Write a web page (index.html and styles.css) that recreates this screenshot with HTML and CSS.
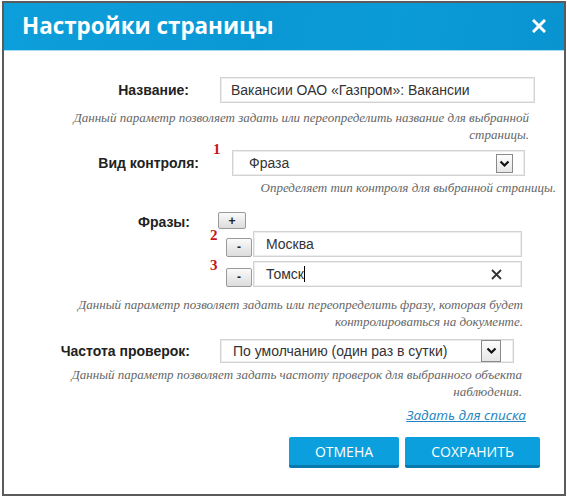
FILE: index.html
```html
<!DOCTYPE html>
<html lang="ru">
<head>
<meta charset="utf-8">
<title>Настройки страницы</title>
<link rel="stylesheet" href="styles.css">
</head>
<body>
<div class="dialog">
  <div class="header">
    <h1 class="title">Настройки страницы</h1>
    <span class="close" aria-label="Закрыть">
      <svg width="14" height="14" viewBox="0 0 14 14"><path d="M2 2 L12 12 M12 2 L2 12" stroke="#fff" stroke-width="3" stroke-linecap="square"/></svg>
    </span>
  </div>
  <div class="content">
    <div class="row row-name">
      <label class="label">Название:</label>
      <div class="field input-name">Вакансии ОАО «Газпром»: Вакансии</div>
    </div>
    <p class="hint hint-name">Данный параметр позволяет задать или переопределить название для выбранной<br>страницы.</p>

    <div class="row row-type">
      <label class="label">Вид контроля:</label>
      <div class="field select select-type">
        <span class="marker m1">1</span>
        <span>Фраза</span>
        <span class="arrow"><svg width="11" height="8" viewBox="0 0 11 8"><path d="M1.5 1.5 L5.5 5.5 L9.5 1.5" fill="none" stroke="#111" stroke-width="2.2"/></svg></span>
      </div>
    </div>
    <p class="hint hint-type">Определяет тип контроля для выбранной страницы.</p>

    <div class="phrases">
      <label class="label">Фразы:</label>
      <div class="phrase-list">
        <button class="btn-small btn-plus">+</button>
        <div class="phrase">
          <span class="marker m2">2</span>
          <button class="btn-small btn-minus">-</button>
          <div class="field phrase-input">Москва</div>
        </div>
        <div class="phrase">
          <span class="marker m3">3</span>
          <button class="btn-small btn-minus">-</button>
          <div class="field phrase-input">Томск<span class="caret"></span>
            <span class="clear"><svg width="11" height="11" viewBox="0 0 11 11"><path d="M1 1 L10 10 M10 1 L1 10" stroke="#333" stroke-width="1.8"/></svg></span>
          </div>
        </div>
      </div>
    </div>
    <p class="hint hint-phrase">Данный параметр позволяет задать или переопределить фразу, которая будет<br>контролироваться на документе.</p>

    <div class="row row-freq">
      <label class="label">Частота проверок:</label>
      <div class="field select select-freq">
        <span>По умолчанию (один раз в сутки)</span>
        <span class="arrow arrow-tall"><svg width="11" height="8" viewBox="0 0 11 8"><path d="M1.5 1.5 L5.5 5.5 L9.5 1.5" fill="none" stroke="#111" stroke-width="2.2"/></svg></span>
      </div>
    </div>
    <p class="hint hint-freq">Данный параметр позволяет задать частоту проверок для выбранного объекта<br>наблюдения.</p>

    <div class="link-row"><a class="link" href="#">Задать для списка</a></div>

    <div class="actions">
      <button class="btn btn-cancel">ОТМЕНА</button>
      <button class="btn btn-save">СОХРАНИТЬ</button>
    </div>
  </div>
</div>
</body>
</html>
```

FILE: styles.css
```css
* { box-sizing: border-box; }
body {
  margin: 0;
  background: #fff;
  font-family: "Liberation Sans", Arial, sans-serif;
  color: #222;
}
.dialog {
  margin: 1px 0 0 2px;
  width: 564px;
  height: 495px;
  border: 2px solid #5b5b5b;
  background: #fff;
}
.header {
  height: 48px;
  background: linear-gradient(100deg, #0d9fdb 0%, #0a98d5 45%, #0b9bd7 70%, #0994d0 100%);
  border-bottom: 1px solid #a6dbf1;
  display: flex;
  align-items: center;
  justify-content: space-between;
  padding: 0 18px 0 18px;
}
.title {
  margin: 0;
  font-family: "Open Sans", sans-serif;
  font-weight: 700;
  font-size: 22.4px;
  color: #fff;
  position: relative;
  top: -1px;
}
.close { display: flex; position: relative; top: -1px; }

.content { display: flex; flex-direction: column; }

.row { display: flex; align-items: center; }
.label {
  font-weight: 700;
  font-size: 14px;
  color: #222;
  text-align: right;
  flex: none;
}
.field {
  border: 1px solid #d3d3d3;
  box-shadow: inset 0 0 0 1px #ececec;
  background: #fff;
  font-size: 14px;
  color: #333;
  display: flex;
  align-items: center;
  position: relative;
}

.row-name { margin-top: 26px; }
.row-name .label { width: 185px; }
.input-name { margin-left: 31px; width: 315px; height: 26px; padding-left: 10px; }

.hint {
  margin: 0;
  font-family: "Liberation Serif", "Times New Roman", serif;
  font-style: italic;
  font-size: 13px;
  line-height: 17px;
  color: #666;
  text-align: right;
}
.hint-name { margin-top: 6px; padding-right: 35px; }

.row-type { margin-top: 7px; }
.row-type .label { width: 195px; }
.select-type { margin-left: 33px; width: 293px; height: 26px; padding-left: 16px; }

.select .arrow {
  position: absolute;
  right: 11px;
  top: 3px;
  width: 17px;
  height: 19px;
  border: 1px solid #8a8a8a;
  background: linear-gradient(#fdfdfd, #e6e6e6);
  display: flex;
  align-items: center;
  justify-content: center;
}
.select .arrow-tall { top: 0; height: 22px; width: 20px; right: 12px; }

.marker {
  position: absolute;
  font-family: "Liberation Serif", "Times New Roman", serif;
  font-weight: 700;
  font-size: 15px;
  color: #c8161d;
  line-height: 1;
}
.m1 { left: -20px; top: -9px; }
.m2 { left: -16px; top: -3px; }
.m3 { left: -16px; top: -3px; }

.hint-type { margin-top: 3px; padding-right: 8px; }

.phrases { display: flex; margin-top: 16px; }
.phrases .label { width: 186px; padding-top: 2px; }
.phrase-list { margin-left: 28px; display: flex; flex-direction: column; align-items: flex-start; }
.btn-small {
  font-family: "Liberation Sans", Arial, sans-serif;
  font-size: 12px;
  font-weight: 700;
  color: #222;
  border: 1px solid #9a9a9a;
  border-radius: 2px;
  background: linear-gradient(#fafafa, #dcdcdc);
  padding: 0;
  line-height: 1;
}
.btn-plus { width: 28px; height: 17px; }
.phrase { display: flex; align-items: center; position: relative; margin-left: 8px; margin-top: 2px; }
.phrase + .phrase { margin-top: 4px; }
.btn-minus { width: 26px; height: 19px; margin-top: 6px; }
.phrase-input { margin-left: 1px; width: 269px; height: 26px; padding-left: 12px; }
.caret { display: inline-block; width: 1px; height: 16px; background: #000; }
.clear { position: absolute; right: 19px; top: 7px; display: flex; }

.hint-phrase { margin-top: 9px; padding-right: 41px; }

.row-freq { margin-top: 9px; }
.row-freq .label { width: 186px; }
.select-freq { margin-left: 30px; width: 294px; height: 24px; padding-left: 12px; }

.hint-freq { margin-top: 3px; padding-right: 42px; }

.link-row { display: flex; justify-content: flex-end; padding-right: 38px; margin-top: 7px; }
.link {
  font-family: "Open Sans", sans-serif;
  font-style: italic;
  font-size: 13.5px;
  line-height: 17px;
  color: #2384c0;
  text-decoration: underline;
}

.actions { display: flex; justify-content: flex-end; gap: 6px; padding-right: 24px; margin-top: 13px; }
.btn {
  height: 31px;
  border: none;
  border-bottom: 3px solid #0878ad;
  border-radius: 2px;
  background: #0ba0dd;
  color: #fff;
  font-family: "Open Sans", sans-serif;
  font-size: 14px;
  font-weight: 400;
  padding: 0;
}
.btn-cancel { width: 110px; }
.btn-save { width: 135px; }
```
